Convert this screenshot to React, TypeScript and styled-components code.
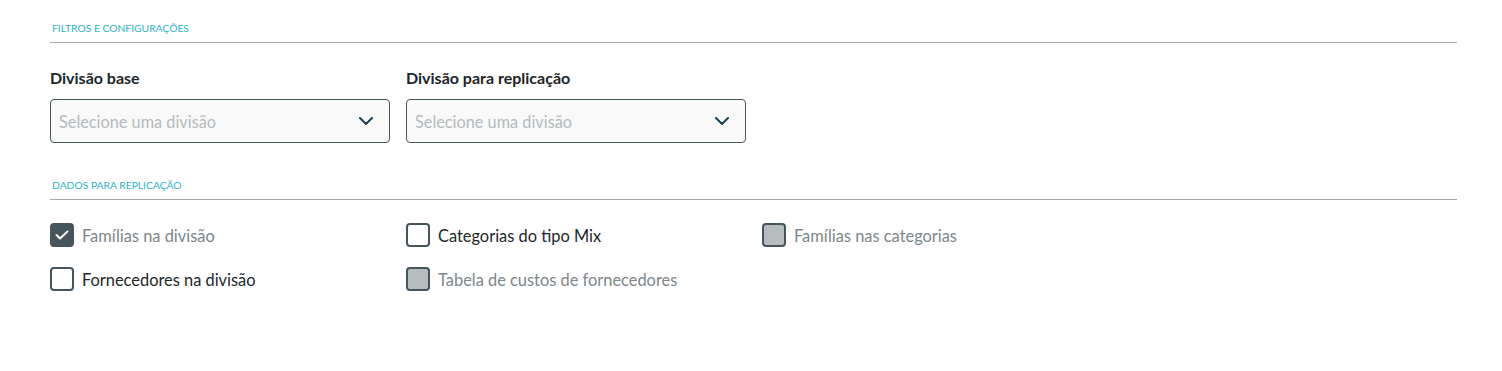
import React from 'react';
import styled, {createGlobalStyle} from 'styled-components';

const GlobalStyle = createGlobalStyle`
  body {
    margin: 0;
    background: #fff;
    font-family: Lato, "Open Sans", sans-serif;
  }
`;

type CheckState = 'checked' | 'unchecked' | 'disabled';

const options: {label: string; state: CheckState}[][] = [
    [
        {label: 'Famílias na divisão', state: 'checked'},
        {label: 'Fornecedores na divisão', state: 'unchecked'},
    ],
    [
        {label: 'Categorias do tipo Mix', state: 'unchecked'},
        {label: 'Tabela de custos de fornecedores', state: 'disabled'},
    ],
    [
        {label: 'Famílias nas categorias', state: 'disabled'},
    ],
];

const Chevron = () => (
    <svg width="14" height="8" viewBox="0 0 14 8" fill="none">
        <path d="M1 1l6 6 6-6" stroke="#1d3f53" strokeWidth="2" strokeLinecap="round" strokeLinejoin="round"/>
    </svg>
);

const Check = () => (
    <svg width="14" height="10" viewBox="0 0 14 10" fill="none">
        <path d="M1.5 5l3.5 3.5L12.5 1.5" stroke="#fff" strokeWidth="2" strokeLinecap="round" strokeLinejoin="round"/>
    </svg>
);

const Select = ({label}: {label: string}) => (
    <Field>
        <FieldLabel>{label}</FieldLabel>
        <SelectBox>
            <Placeholder>Selecione uma divisão</Placeholder>
            <Chevron/>
        </SelectBox>
    </Field>
);

const App = () => {
    return (
        <Page>
            <GlobalStyle/>
            <Section>
                <SectionTitle>Filtros e configurações</SectionTitle>
                <Fields>
                    <Select label="Divisão base"/>
                    <Select label="Divisão para replicação"/>
                </Fields>
            </Section>

            <Section>
                <SectionTitle>Dados para replicação</SectionTitle>
                <Options>
                    {options.map((col, i) => (
                        <OptionColumn key={i}>
                            {col.map(opt => (
                                <Option key={opt.label}>
                                    <Box state={opt.state}>
                                        {opt.state === 'checked' && <Check/>}
                                    </Box>
                                    <OptionLabel muted={opt.state !== 'unchecked'}>{opt.label}</OptionLabel>
                                </Option>
                            ))}
                        </OptionColumn>
                    ))}
                </Options>
            </Section>
        </Page>
    );
}

export default App;

const OptionLabel = styled.span<{muted: boolean}>`
  font-size: 16.4px;
  color: ${p => p.muted ? '#7d868b' : '#22272a'};
`;

const Box = styled.span<{state: CheckState}>`
  box-sizing: border-box;
  width: 24px;
  height: 24px;
  border-radius: 4px;
  border: 2px solid #46555c;
  display: flex;
  align-items: center;
  justify-content: center;
  background: ${p => p.state === 'checked' ? '#46555c' : p.state === 'disabled' ? '#b6bdbf' : '#fff'};
`;

const Option = styled.label`
  display: flex;
  align-items: center;
  gap: 8px;
  height: 24px;
`;

const OptionColumn = styled.div`
  width: 340px;
  display: flex;
  flex-direction: column;
  gap: 20px;
`;

const Options = styled.div`
  display: flex;
  gap: 16px;
  padding-top: 23px;
`;

const Placeholder = styled.span`
  font-size: 16.3px;
  color: #b4babd;
`;

const SelectBox = styled.div`
  box-sizing: border-box;
  width: 340px;
  height: 44px;
  border: 1px solid #46555c;
  border-radius: 4px;
  background: #f9f9f9;
  display: flex;
  align-items: center;
  justify-content: space-between;
  padding: 0 16px 0 8px;
`;

const FieldLabel = styled.div`
  font-size: 16px;
  font-weight: 700;
  color: #1e2427;
  line-height: 18px;
  margin-bottom: 12px;
`;

const Field = styled.div`
  display: flex;
  flex-direction: column;
`;

const Fields = styled.div`
  display: flex;
  gap: 16px;
  padding-top: 26px;
`;

const SectionTitle = styled.div`
  font-size: 10.3px;
  text-transform: uppercase;
  color: #2fb3c6;
  line-height: 12px;
  padding: 0 2px 8px;
  border-bottom: 1px solid #a3a8ab;
`;

const Section = styled.section`
  & + & {
    margin-top: 36px;
  }
`;

const Page = styled.div`
  padding: 22px 45px 0 50px;
`;
